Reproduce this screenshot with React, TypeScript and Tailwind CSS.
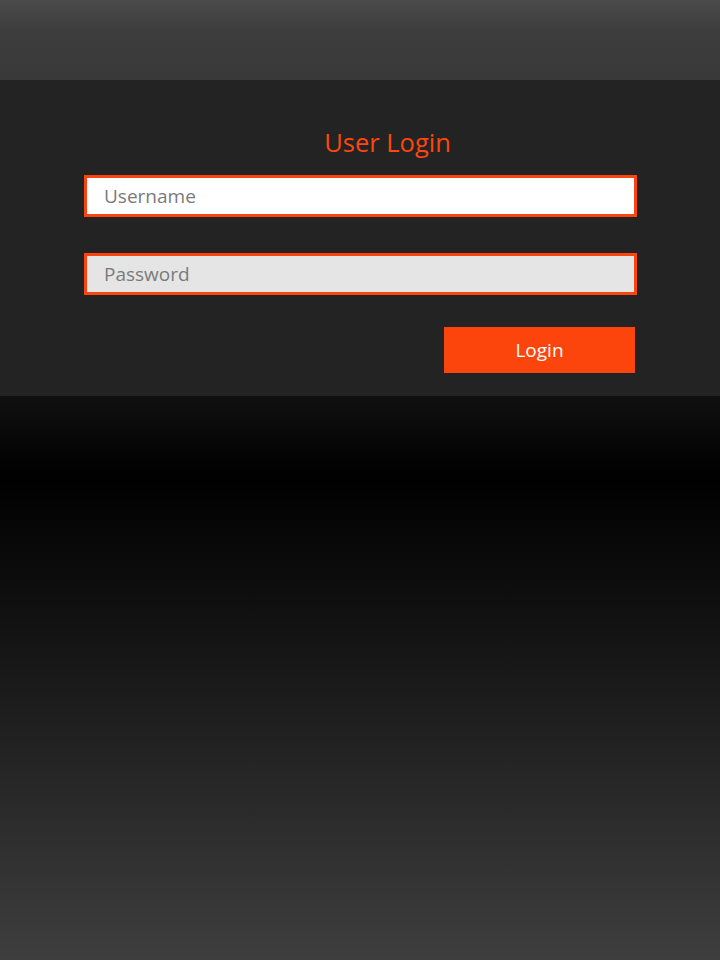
import React from 'react';

const App: React.FC = () => {
  return (
    <div className="min-h-[960px] w-full flex flex-col font-['Open_Sans','Noto_Sans',sans-serif]">
      <div className="h-[80px] shrink-0 bg-[linear-gradient(to_bottom,#4a4a4a,#3d3d3d_40%,#393939)]"></div>
      <div className="h-[316px] shrink-0 bg-[#232323] flex flex-col pl-[84px] pr-[83px] pt-[41px]">
        <div className="h-[42px] flex justify-center pl-[54px]">
          <h1 className="text-[25.5px] leading-[42px] text-[#fb4710] font-normal">User Login</h1>
        </div>
        <div className="mt-[12px] flex flex-col gap-[36px]">
          <input
            type="text"
            placeholder="Username"
            className="w-full h-[42px] border-[3px] border-[#fb4510] bg-white px-[17px] text-[19px] text-[#333] placeholder:text-[#7a7a7a] outline-none"
          />
          <input
            type="password"
            placeholder="Password"
            className="w-full h-[42px] border-[3px] border-[#fb4510] bg-[#e5e5e5] px-[17px] text-[19px] text-[#333] placeholder:text-[#7a7a7a] outline-none"
          />
        </div>
        <div className="mt-[32px] flex justify-end pr-[2px]">
          <button className="w-[191px] h-[46px] bg-[#fb450c] text-white text-[19px]">Login</button>
        </div>
      </div>
      <div className="flex-1 bg-[linear-gradient(to_bottom,#101010_0px,#000000_80px,#111111_220px,#262626_380px,#3e3e3e_100%)]"></div>
    </div>
  );
};

export default App;
